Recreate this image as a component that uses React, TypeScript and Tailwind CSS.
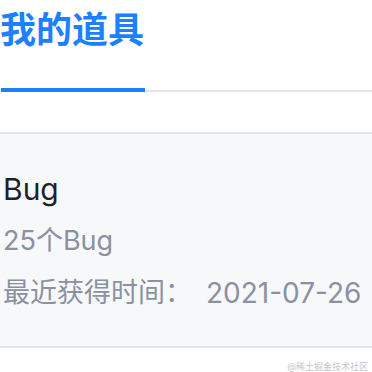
export default function App() {
  const font = { fontFamily: 'Inter, "Noto Sans CJK SC", sans-serif' };
  return (
    <div className="w-[372px] h-[372px] bg-white overflow-hidden" style={font}>
      <div className="border-b-2 border-[#e4e6eb]">
        <h1 className="pt-[12px] text-[36px] leading-[36px] font-bold text-[#1e80ff]">我的道具</h1>
        <div className="mt-[40px] ml-[1px] w-[144px] h-[4px] bg-[#1e80ff] -mb-[2px]" />
      </div>
      <div className="mt-[40px] border-y-2 border-[#e4e6eb] bg-[#f7f8fa] pl-[3px] pt-[29px] pb-[27px]">
        <div className="h-[52px] flex items-center text-[30px] text-[#1d2129]">Bug</div>
        <div className="h-[52px] flex items-center text-[27px] text-[#8a919f]">25个Bug</div>
        <div className="h-[52px] flex items-center text-[27px] text-[#8a919f]">
          <span>最近获得时间：</span>
          <span className="ml-[14px] text-[28px]">2021-07-26</span>
        </div>
      </div>
      <div className="flex justify-end pr-[4px] pt-[12px] text-[9px] text-[#c2c6cc]">@稀土掘金技术社区</div>
    </div>
  );
}
